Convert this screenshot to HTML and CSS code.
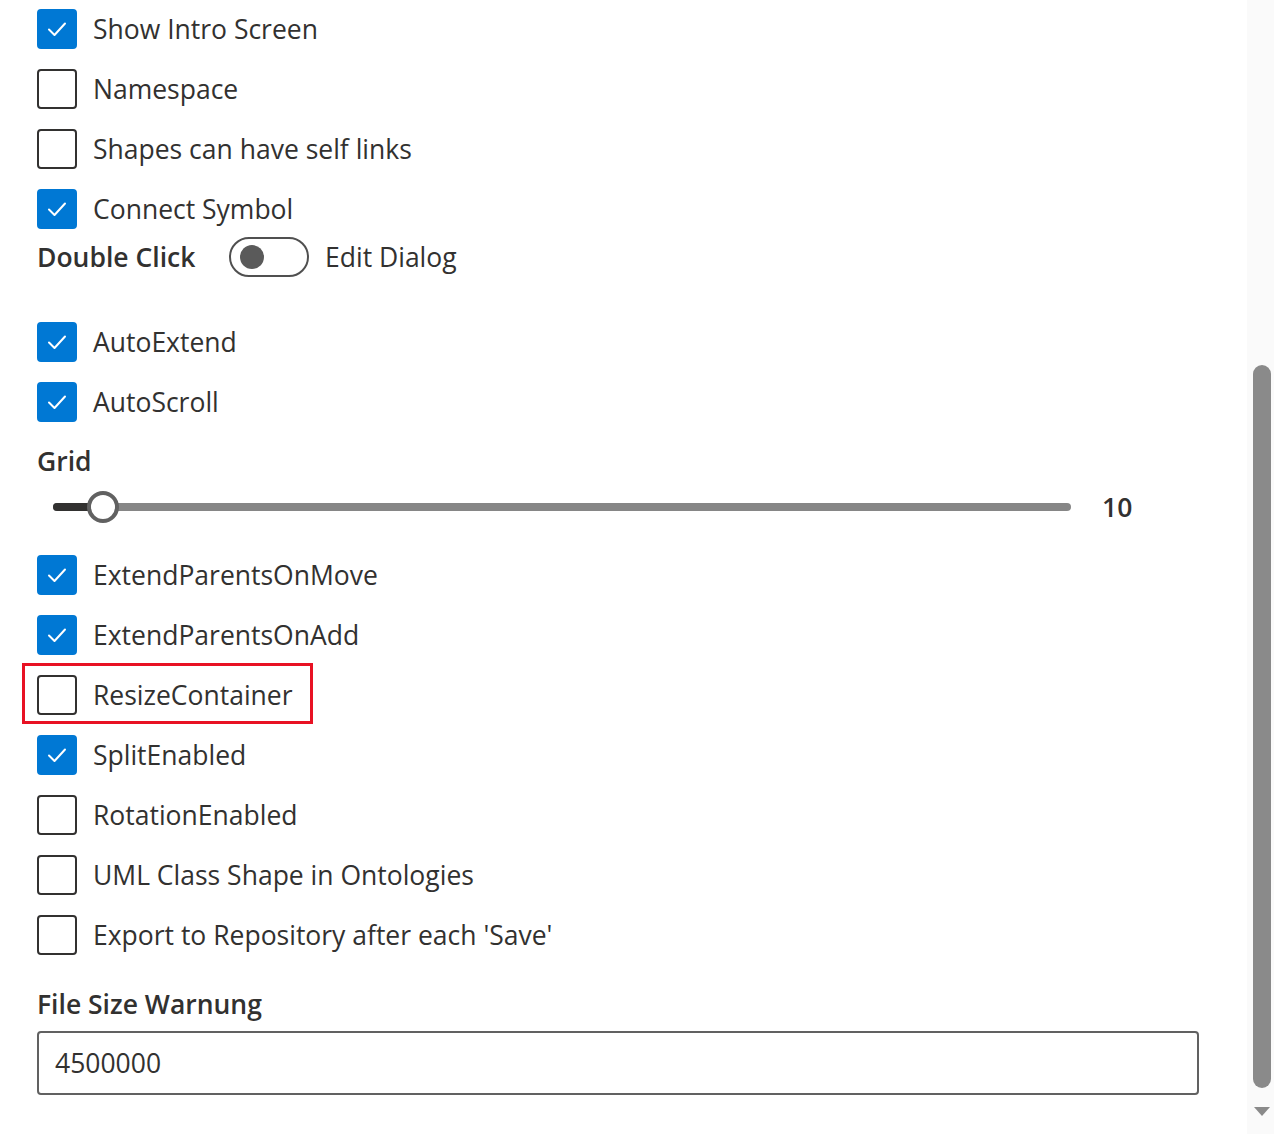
FILE: index.html
```html
<!DOCTYPE html>
<html>
<head>
<meta charset="utf-8">
<link rel="stylesheet" href="styles.css">
</head>
<body>
<div class="page">
  <main class="content">
    <label class="check on first"><span class="box"><svg viewBox="0 0 40 40"><path d="M12 20.5 L17.5 26 L28 14.5"/></svg></span><span class="txt">Show Intro Screen</span></label>
    <label class="check"><span class="box"></span><span class="txt">Namespace</span></label>
    <label class="check"><span class="box"></span><span class="txt">Shapes can have self links</span></label>
    <label class="check on"><span class="box"><svg viewBox="0 0 40 40"><path d="M12 20.5 L17.5 26 L28 14.5"/></svg></span><span class="txt">Connect Symbol</span></label>
    <div class="toggle-row">
      <span class="strong dc">Double Click</span>
      <span class="toggle"><span class="knob"></span></span>
      <span class="txt">Edit Dialog</span>
    </div>
    <label class="check on auto"><span class="box"><svg viewBox="0 0 40 40"><path d="M12 20.5 L17.5 26 L28 14.5"/></svg></span><span class="txt">AutoExtend</span></label>
    <label class="check on"><span class="box"><svg viewBox="0 0 40 40"><path d="M12 20.5 L17.5 26 L28 14.5"/></svg></span><span class="txt">AutoScroll</span></label>
    <div class="strong grid-label">Grid</div>
    <div class="slider-row">
      <div class="track"><div class="fill"></div><div class="thumb"></div></div>
      <span class="strong val">10</span>
    </div>
    <label class="check on after-slider"><span class="box"><svg viewBox="0 0 40 40"><path d="M12 20.5 L17.5 26 L28 14.5"/></svg></span><span class="txt">ExtendParentsOnMove</span></label>
    <label class="check on"><span class="box"><svg viewBox="0 0 40 40"><path d="M12 20.5 L17.5 26 L28 14.5"/></svg></span><span class="txt">ExtendParentsOnAdd</span></label>
    <label class="check highlight"><span class="box"></span><span class="txt">ResizeContainer</span></label>
    <label class="check on"><span class="box"><svg viewBox="0 0 40 40"><path d="M12 20.5 L17.5 26 L28 14.5"/></svg></span><span class="txt">SplitEnabled</span></label>
    <label class="check"><span class="box"></span><span class="txt">RotationEnabled</span></label>
    <label class="check"><span class="box"></span><span class="txt">UML Class Shape in Ontologies</span></label>
    <label class="check"><span class="box"></span><span class="txt">Export to Repository after each 'Save'</span></label>
    <div class="strong fs-label">File Size Warnung</div>
    <div class="input">4500000</div>
  </main>
  <aside class="scrollbar">
    <div class="sb-thumb"></div>
    <div class="sb-arrow"></div>
  </aside>
</div>
</body>
</html>
```

FILE: styles.css
```css
html, body {
  margin: 0;
  padding: 0;
  background: #ffffff;
}
body {
  font-family: "Open Sans", "Noto Sans", sans-serif;
  color: #323130;
  font-size: 26.5px;
}
.page {
  display: flex;
  height: 1134px;
  overflow: hidden;
}
.content {
  flex: 1;
  padding: 9px 0 0 37px;
  display: flex;
  flex-direction: column;
  align-items: flex-start;
}
.check {
  display: flex;
  align-items: center;
  height: 40px;
  margin-top: 20px;
  gap: 16px;
}
.check.first { margin-top: 0; }
.check.auto { margin-top: 45px; }
.check.after-slider { margin-top: 28px; }
.box {
  width: 40px;
  height: 40px;
  box-sizing: border-box;
  border: 2px solid #323130;
  border-radius: 4px;
  display: flex;
  flex-shrink: 0;
}
.check.on .box {
  background: #0078d4;
  border-color: #0078d4;
}
.box svg {
  width: 40px;
  height: 40px;
  margin: -2px;
}
.box svg path {
  fill: none;
  stroke: #ffffff;
  stroke-width: 2;
  stroke-linecap: round;
  stroke-linejoin: round;
}
.txt {
  line-height: 36px;
  white-space: nowrap;
}
.strong {
  font-weight: 600;
  line-height: 36px;
}
.highlight {
  position: relative;
}
.highlight::before {
  content: "";
  position: absolute;
  left: -15px;
  top: -12px;
  width: 291px;
  height: 61px;
  box-sizing: border-box;
  border: 3px solid #e81123;
}
.toggle-row {
  display: flex;
  align-items: center;
  height: 40px;
  margin-top: 8px;
}
.dc { width: 192px; }
.toggle {
  width: 80px;
  height: 40px;
  box-sizing: border-box;
  border: 2px solid #505050;
  border-radius: 20px;
  display: flex;
  align-items: center;
  padding-left: 9px;
  margin-right: 16px;
}
.knob {
  width: 24px;
  height: 24px;
  border-radius: 50%;
  background: #5a5a5a;
}
.grid-label {
  margin-top: 21px;
}
.slider-row {
  display: flex;
  align-items: center;
  height: 40px;
  margin-top: 8px;
  margin-left: 16px;
}
.track {
  width: 1018px;
  height: 8px;
  border-radius: 4px;
  background: #868686;
  position: relative;
}
.fill {
  position: absolute;
  left: 0;
  top: 0;
  width: 50px;
  height: 8px;
  border-radius: 4px;
  background: #323130;
}
.thumb {
  position: absolute;
  left: 34px;
  top: -12px;
  width: 32px;
  height: 32px;
  box-sizing: border-box;
  border: 4px solid #616161;
  border-radius: 50%;
  background: #ffffff;
}
.val {
  margin-left: 31px;
}
.fs-label {
  margin-top: 31px;
}
.input {
  margin-top: 9px;
  width: 1162px;
  height: 64px;
  box-sizing: border-box;
  border: 2px solid #616161;
  border-radius: 4px;
  padding-left: 16px;
  display: flex;
  align-items: center;
}
.scrollbar {
  width: 27px;
  background: #fafafa;
  position: relative;
}
.sb-thumb {
  position: absolute;
  left: 6px;
  top: 365px;
  width: 18px;
  height: 723px;
  border-radius: 9px;
  background: #8a8a8a;
}
.sb-arrow {
  position: absolute;
  left: 7px;
  top: 1107px;
  width: 0;
  height: 0;
  border-left: 8px solid transparent;
  border-right: 8px solid transparent;
  border-top: 9px solid #8a8a8a;
}
```
